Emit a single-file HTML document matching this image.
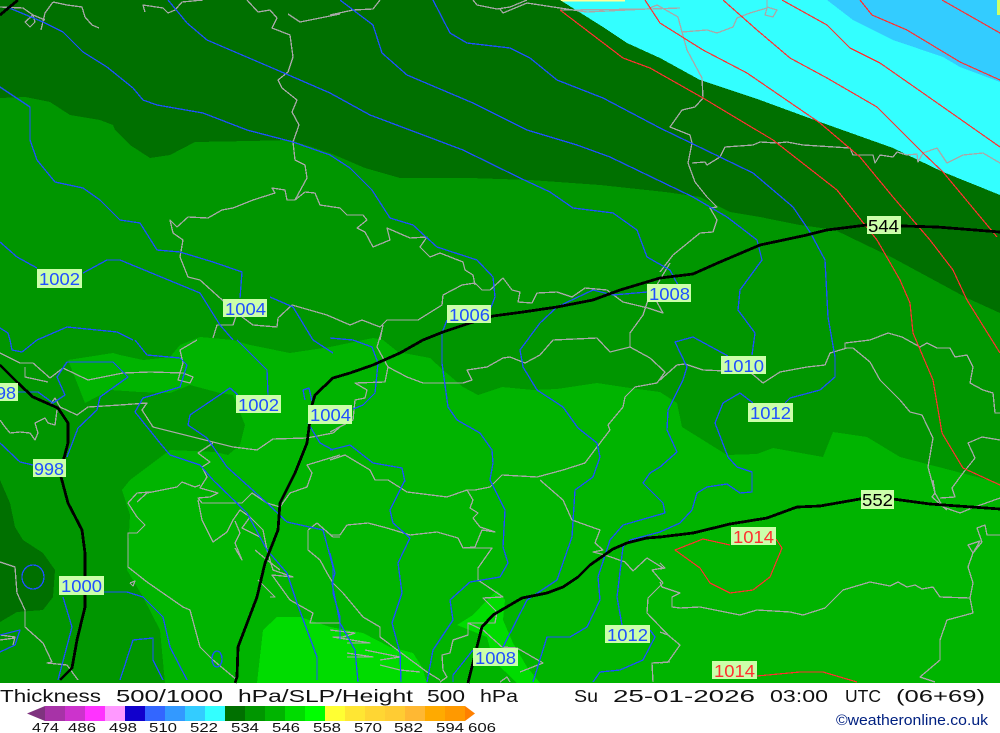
<!DOCTYPE html>
<html><head><meta charset="utf-8"><style>
html,body{margin:0;padding:0;background:#fff;width:1000px;height:733px;overflow:hidden}
svg{display:block}
.g,.b,.r,.k{fill:none;stroke-linejoin:round}
.g polyline{stroke:#a8a8a8;stroke-width:1.3;fill:none}
.b polyline{stroke:#1f50ff;stroke-width:1.3;fill:none}
.r polyline{stroke:#ff3030;stroke-width:1.2;fill:none}
.k polyline{stroke:#000;stroke-width:2.8;fill:none}
.l rect{fill:#ccffaa}
.l text{font:17.5px "Liberation Sans",sans-serif;fill:#1f50ff}
.t text{font:17.5px "Liberation Sans",sans-serif;fill:#111}
.n text{font:13px "Liberation Sans",sans-serif;fill:#111}
</style></head><body>
<svg width="1000" height="733" viewBox="0 0 1000 733" xmlns="http://www.w3.org/2000/svg">
<rect width="1000" height="733" fill="#fff"/>
<g shape-rendering="crispEdges">
<rect width="1000" height="683" fill="#009600"/>
<polygon fill="#33ffff" points="560,0 1000,0 1000,200 943,172 893,148 820,122 760,100 700,80 660,58 627,43 603,27"/>
<polygon fill="#33ccff" points="827,0 1000,0 1000,82 960,67 943,57 893,40 853,20"/>
<rect x="560" y="0" width="65" height="1.5" fill="#ffff99"/>
<rect x="997" y="0" width="3" height="15" fill="#ccff66"/>
<polygon fill="#007000" points="0,0 560,0 603,27 627,43 660,58 700,80 760,100 820,122 893,148 943,172 1000,195 1000,313 967,298 893,258 835,230 800,225 760,217 730,212 700,197 665,192 600,185 530,180 470,178 400,178 365,168 330,153 290,140 250,141 195,142 170,155 150,158 130,145 115,130 113,125 100,120 70,115 50,102 25,97 0,98"/>
<polygon fill="#00b400" points="68,360 113,353 120,355 143,360 170,357 180,345 200,337 233,340 250,345 290,353 310,350 330,347 373,338 383,340 398,352 430,358 443,370 463,387 478,395 502,387 533,390 557,389 597,383 630,388 660,392 677,403 682,427 727,455 757,454 773,448 823,457 833,432 867,437 900,457 950,470 1000,483 1000,683 165,683 160,630 143,597 127,570 130,515 122,490 130,480 170,450 215,452 228,455 240,445 245,425 233,395 220,393 190,385 170,393 140,392 110,390 85,403"/>
<polygon fill="#007000" points="0,480 10,503 15,527 23,540 43,553 55,570 53,597 43,610 17,612 0,622"/>
<polygon fill="#00dc00" points="257,683 263,630 277,617 300,617 330,627 363,633 390,647 413,653 422,667 427,683"/>
<polygon fill="#00dc00" points="497,590 505,600 503,620 513,643 527,667 540,683 517,683 493,660 487,637 457,625 473,615 487,600"/>
</g>
<g class="g" shape-rendering="crispEdges">
<polyline points="53,2 45,13 41,30"/>
<polyline points="53,2 67,5 82,7 85,17 92,25 99,28"/>
<polyline points="0,7 23,8 33,15 25,22 30,27 35,22 33,15 45,20"/>
<polyline points="145,12 143,5 163,8 168,13 175,10 182,2 203,0"/>
<polyline points="247,0 258,12 270,10 277,18 272,28 290,35 293,57 288,72 278,80 282,88 297,100 292,112 299,125 293,142 295,160 305,165 307,178 295,200 287,200 285,190 272,188 275,193 253,200 233,208 222,210 208,218 188,217 177,227 170,220 173,233 183,240 180,257 188,277 200,280 220,298 237,313 233,325 217,325 213,338"/>
<polyline points="237,313 253,325 277,327 278,318 292,305 327,315 350,325 362,320 380,327 387,320 403,320 418,320 442,305 443,295 462,285 475,283 482,290 490,290 503,278 512,290 520,292 518,302 532,303 537,293 557,292 572,297 585,288 607,290 623,302 648,308 663,313 652,293 670,263"/>
<polyline points="288,14 300,22 340,14"/>
<polyline points="295,200 305,192 315,193 320,205 340,208 347,215 363,215 367,220 357,228 365,232 373,247 390,240 387,228 410,238 427,237 420,247 430,257 440,253 463,262 465,270 473,275 475,285"/>
<polyline points="380,340 383,325"/>
<polyline points="382,330 377,347 388,367 385,382 355,383 367,390 365,398 355,400 353,420 330,432"/>
<polyline points="388,367 407,377 423,383 463,383 472,380 467,370 487,367 503,358 510,357 525,363 540,355 553,340 597,338 610,352 630,347 650,358 665,372 657,383 635,387 625,397 623,407 608,425 610,430 597,447 585,463 563,470 537,477 502,475 490,487 475,490 467,490"/>
<polyline points="630,347 630,333 643,315 648,300"/>
<polyline points="388,480 407,492 447,497 467,490 473,500 470,508 478,513 473,518 480,527 495,532 482,530 475,547 463,548"/>
<polyline points="330,535 340,535 347,525 368,523 387,528 410,535 437,532 458,538 463,548 473,548 492,548 478,568 478,580 503,597 483,598 497,612 495,623 468,623 483,630 502,647 517,648 543,663 520,672"/>
<polyline points="330,460 345,455 370,470 375,480 388,480"/>
<polyline points="0,353 20,363 33,363 50,378 63,368 88,380 123,373 150,372 183,373 193,377 190,383 178,380 183,363 180,350 197,340"/>
<polyline points="25,367 25,377 48,382"/>
<polyline points="33,397 50,405 55,398 60,407 77,415 88,407 120,405 147,403 142,410 153,427 197,438 233,447 257,450 273,439 307,438 333,433 340,427"/>
<polyline points="213,443 198,453 210,462 202,467 207,477 200,488 218,493 210,497 198,498 202,503 242,503 252,493 267,503 280,507 290,493 307,487 312,473 307,465 340,455"/>
<polyline points="137,502 147,493 177,487 182,482 195,487 200,485"/>
<polyline points="128,503 137,493 150,492"/>
<polyline points="128,503 137,517 145,525 137,533 128,533 128,567 147,582 183,607 190,610 200,647 213,660 237,680"/>
<polyline points="198,500 202,520 213,542 227,532 233,520 240,510 250,517 263,530 267,550 273,570 293,577 272,575 290,600 313,613 310,623 340,623"/>
<polyline points="235,521 240,533 235,543 242,560 235,548"/>
<polyline points="250,517 242,528 260,537"/>
<polyline points="255,550 267,560 280,570"/>
<polyline points="258,580 275,597 270,597"/>
<polyline points="308,530 317,523 333,537 340,537"/>
<polyline points="308,530 308,550 320,560 327,573 333,583 343,593 363,617 380,627 380,637 400,652 427,672 440,680"/>
<polyline points="0,562 15,567 17,593 25,610 25,627 43,643 52,662 47,663 67,665 78,680"/>
<polyline points="5,427 10,433 20,432 30,433 35,440 38,433 35,423 45,418 48,423 55,425 57,410"/>
<polyline points="0,420 5,427"/>
<polyline points="0,635 15,637 13,645"/>
<polyline points="0,640 15,638"/>
<polyline points="130,583 135,581 133,586 130,583"/>
<polyline points="660,380 677,365 685,364 703,370 750,372 763,383 780,372 807,367 825,365 830,353 847,348 853,348 870,362 880,380 900,400 910,412 922,415 933,438 928,467 935,493 932,497 947,510"/>
<polyline points="845,348 845,343 870,340 888,333 902,337 920,347 927,343 937,348 950,348 955,357 967,355 973,367 970,383 983,390 993,393 995,413 1000,413"/>
<polyline points="1000,440 982,437 968,443 975,458 963,473 952,488 955,497 940,498"/>
<polyline points="933,480 935,493 943,507 960,513 972,508 1000,498"/>
<polyline points="1000,535 987,535 985,525 977,528 982,542 973,553 968,545 980,541 973,553 968,567 973,583 970,598 940,597 933,587 922,589 915,585 907,587 898,582 890,586 870,582 843,590 825,608 803,615 790,612 757,610 740,615 700,607 680,608 672,607 672,597 680,593 662,587 660,582"/>
<polyline points="970,598 973,613 947,620 940,640 940,660 920,677 935,682"/>
<polyline points="660,632 668,635 680,645 668,662 660,663"/>
<polyline points="660,563 665,568 660,569"/>
<polyline points="540,480 563,500 572,520 600,530 595,543 603,550 593,552 605,555 625,562 633,571 647,558 663,568 652,570 663,583 648,598 647,613 670,637"/>
<polyline points="670,662 652,663 653,682"/>
<polyline points="468,623 468,635 453,640 450,653 442,655 443,670 447,677 440,682"/>
<polyline points="500,682 507,677 510,682"/>
<polyline points="330,630 355,633 343,637 333,637 370,643 347,643"/>
<polyline points="347,653 373,657 347,657"/>
<polyline points="365,650 400,657 380,660"/>
<polyline points="380,665 400,670 420,672"/>
<polyline points="560,10 573,10 587,12 647,9 657,5 678,17 682,32"/>
<polyline points="682,32 707,30 717,33 733,27 737,18 750,13 767,8 767,0"/>
<polyline points="767,8 765,15 773,17 777,10 767,7"/>
<polyline points="682,32 687,50 702,78 703,98 695,107 682,110 670,127 690,135 692,143 688,163 695,182 707,197 717,207 710,208 717,220 713,232 700,233 673,255 660,272"/>
<polyline points="692,163 705,162 707,165 720,157 725,147 753,145 760,142 777,143 787,142 803,145 850,148 853,155 873,155 875,163 880,155 893,157 897,152 907,155 917,154 918,162 923,153 937,148 947,163 963,155 983,153 1000,163"/>
<polyline points="330,15 353,10 373,9 380,0"/>
<polyline points="473,0 477,5 497,9 510,7 527,0"/>
<polyline points="500,9 503,13 527,3 573,10 650,9 680,8"/>
</g>
<g class="b" shape-rendering="crispEdges">
<polyline points="7,7 43,22 63,32 83,52 107,67 133,88 143,100 157,105 203,113 247,130 293,142 330,155 350,168 372,190 390,218 413,225 437,247 477,260 493,277 495,297 490,310"/>
<polyline points="447,320 442,333 442,363 448,407 457,420 480,433 492,450 493,463 490,480 505,510 503,547 508,563 500,577 470,582 450,600 453,620 433,650 427,682"/>
<polyline points="168,0 187,23 207,40 277,70 330,93 370,115 463,150 520,178 550,192 573,208 613,213 637,230 647,257 670,270 678,285"/>
<polyline points="647,292 613,295 593,290 557,307 540,323 520,350 523,367 537,390 563,407 578,428 597,443 600,457 593,477 575,490 572,537 557,580 527,600 503,647"/>
<polyline points="340,0 373,25 382,53 407,75 473,103 527,130 577,145 610,157 693,197 727,217 757,240 762,260 740,290 738,310 755,333 752,355"/>
<polyline points="433,0 450,33 467,43 510,48 530,58 557,80 603,98 660,128 753,173 793,207 810,232 825,260 828,317 835,357 835,377 820,390 790,398 785,403"/>
<polyline points="728,356 693,337 675,342 687,367 683,380 668,410 667,430 677,452 660,467 650,473 643,483 663,503 665,513 623,525 610,540 598,577 600,600 587,627 570,637 547,637 533,682"/>
<polyline points="622,625 617,597 623,547 630,540 660,532 680,523 692,510 697,493 707,487 727,484 740,493 752,492 752,472 737,467 728,457 715,423 723,403 740,393 753,403"/>
<polyline points="650,630 655,637 643,660 620,670 600,672 593,682"/>
<polyline points="473,650 453,675 453,682"/>
<polyline points="330,553 335,573 332,583 340,623 355,650 358,682"/>
<polyline points="405,480 390,510 393,523 410,538 398,563 402,593 392,623 400,653 401,682"/>
<polyline points="330,338 353,340 372,347 378,363 375,393 363,405 353,409"/>
<polyline points="18,392 38,392 53,403 65,395 57,377 67,362 113,362 128,377 100,397 97,410 78,428 67,457"/>
<polyline points="135,340 147,355 180,358 187,365 180,387 143,398 135,412 160,443 170,455 200,465 213,480 247,513 267,550 287,573 297,603 317,657 317,680"/>
<polyline points="237,340 267,370 268,395"/>
<polyline points="238,395 230,388 190,415 188,425 207,438 227,467 267,503 287,522 323,530 333,567 333,593 340,617 340,640"/>
<polyline points="0,443 20,462 33,465"/>
<polyline points="0,328 8,333 10,340 12,350 22,352 37,340 67,327 117,332 133,340"/>
<polyline points="103,592 127,592 143,597 163,617 170,647 187,680"/>
<polyline points="63,597 72,627 58,680"/>
<polyline points="120,680 133,640 153,638 153,660 163,680"/>
<ellipse cx="33" cy="577" rx="11" ry="12" style="fill:none;stroke:#1f50ff;stroke-width:1.3"/>
<ellipse cx="217" cy="659" rx="5" ry="8" style="fill:none;stroke:#1f50ff;stroke-width:1.3"/>
<polyline points="0,635 20,630 15,645 0,652"/>
<polyline points="0,87 30,107 30,140 37,160 55,182 83,188 100,200 120,220 140,223 157,250 180,252 213,262 242,272 240,298"/>
<polyline points="0,242 17,257 37,268"/>
<polyline points="83,273 107,260 120,260 200,293 220,325 233,340"/>
<polyline points="270,297 293,307 313,340 333,353"/>
<polyline points="330,450 350,445 373,463 402,468 405,482"/>
<polyline points="333,450 320,443 308,423"/>
<polyline points="305,400 303,390 309,388 313,405"/>
</g>
<g class="r" shape-rendering="crispEdges">
<polyline points="560,10 623,58 650,68 703,98 773,140 837,190 877,240 900,280 910,303 913,333 933,380 942,433 963,468 1000,485"/>
<polyline points="645,0 660,23 703,50 747,73 820,123 860,157 893,197 930,240 953,270 967,300 1000,353"/>
<polyline points="723,0 757,30 790,58 827,78 877,107 923,153 943,172 997,237"/>
<polyline points="782,0 827,25 850,48 880,63 933,100 1000,147"/>
<polyline points="860,0 872,15 907,30 960,62 1000,80"/>
<polyline points="942,0 1000,33"/>
<polyline points="730,545 703,539 675,550 700,568 710,583 730,593 753,590 770,577 782,548 776,539"/>
<polyline points="757,676 800,672 823,672 857,682"/>
</g>
<g class="k" shape-rendering="crispEdges">
<polyline points="468,683 477,647 482,627 493,615 522,598 547,593 563,587 578,577 590,565 613,549 627,543 647,538 660,537 693,533 730,524 767,518 797,507 820,506 860,499 893,499 930,504 1000,509"/>
<polyline points="0,365 18,383 33,397 58,408 68,423 68,443 60,473 68,503 82,530 85,553 85,607 77,640 72,668 60,680"/>
<polyline points="0,15 18,0"/>
<polyline points="235,683 237,677 238,647 257,597 265,563 278,530 280,503 295,473 307,443 312,405 315,395 333,378 350,373 373,365 400,353 423,340 443,332 470,323 493,316 523,312 557,307 593,300 620,290 660,278 693,274 720,262 760,245 807,235 827,230 867,225 937,227 1000,232"/>
</g>
<g class="l">
<rect x="37" y="269" width="45" height="19"/><text x="39" y="285" textLength="41" lengthAdjust="spacingAndGlyphs">1002</text>
<rect x="223" y="299" width="44" height="18"/><text x="225" y="315" textLength="41" lengthAdjust="spacingAndGlyphs">1004</text>
<rect x="447" y="305" width="44" height="18"/><text x="449" y="321" textLength="41" lengthAdjust="spacingAndGlyphs">1006</text>
<rect x="647" y="284" width="44" height="18"/><text x="649" y="300" textLength="41" lengthAdjust="spacingAndGlyphs">1008</text>
<rect x="721" y="356" width="45" height="18"/><text x="723" y="372" textLength="41" lengthAdjust="spacingAndGlyphs">1010</text>
<rect x="748" y="403" width="45" height="19"/><text x="750" y="419" textLength="41" lengthAdjust="spacingAndGlyphs">1012</text>
<rect x="236" y="395" width="45" height="18"/><text x="238" y="411" textLength="41" lengthAdjust="spacingAndGlyphs">1002</text>
<rect x="308" y="405" width="44" height="19"/><text x="310" y="421" textLength="41" lengthAdjust="spacingAndGlyphs">1004</text>
<rect x="33" y="459" width="33" height="18"/><text x="34" y="475" textLength="30" lengthAdjust="spacingAndGlyphs">998</text>
<rect x="0" y="383" width="18" height="18"/><text x="-14" y="399" textLength="30" lengthAdjust="spacingAndGlyphs">998</text>
<rect x="59" y="576" width="45" height="19"/><text x="61" y="592" textLength="41" lengthAdjust="spacingAndGlyphs">1000</text>
<rect x="605" y="625" width="45" height="18"/><text x="607" y="641" textLength="41" lengthAdjust="spacingAndGlyphs">1012</text>
<rect x="473" y="648" width="45" height="18"/><text x="475" y="664" textLength="41" lengthAdjust="spacingAndGlyphs">1008</text>
<rect x="731" y="527" width="45" height="18"/><text x="733" y="543" textLength="41" lengthAdjust="spacingAndGlyphs" style="fill:#ff3030">1014</text>
<rect x="712" y="661" width="45" height="18"/><text x="714" y="677" textLength="41" lengthAdjust="spacingAndGlyphs" style="fill:#ff3030">1014</text>
<rect x="861" y="490" width="33" height="19"/><text x="862" y="506" textLength="31" lengthAdjust="spacingAndGlyphs" style="fill:#000">552</text>
<rect x="867" y="216" width="34" height="18"/><text x="868" y="232" textLength="31" lengthAdjust="spacingAndGlyphs" style="fill:#000">544</text>
</g>
<g class="t">
<text x="0" y="702" textLength="101" lengthAdjust="spacingAndGlyphs">Thickness</text>
<text x="116" y="702" textLength="107" lengthAdjust="spacingAndGlyphs">500/1000</text>
<text x="238" y="702" textLength="175" lengthAdjust="spacingAndGlyphs">hPa/SLP/Height</text>
<text x="427" y="702" textLength="38" lengthAdjust="spacingAndGlyphs">500</text>
<text x="480" y="702" textLength="38" lengthAdjust="spacingAndGlyphs">hPa</text>
<text x="574" y="702" textLength="24" lengthAdjust="spacingAndGlyphs">Su</text>
<text x="613" y="702" textLength="142" lengthAdjust="spacingAndGlyphs">25-01-2026</text>
<text x="770" y="702" textLength="58" lengthAdjust="spacingAndGlyphs">03:00</text>
<text x="845" y="702" textLength="36" lengthAdjust="spacingAndGlyphs">UTC</text>
<text x="896" y="702" textLength="89" lengthAdjust="spacingAndGlyphs">(06+69)</text>
</g>
<g shape-rendering="crispEdges">
<rect x="45" y="706" width="20" height="15" fill="#a733a7"/>
<rect x="65" y="706" width="20" height="15" fill="#cc33cc"/>
<rect x="85" y="706" width="20" height="15" fill="#ff33ff"/>
<rect x="105" y="706" width="20" height="15" fill="#ff99ff"/>
<rect x="125" y="706" width="20" height="15" fill="#1100cc"/>
<rect x="145" y="706" width="20" height="15" fill="#3366ff"/>
<rect x="165" y="706" width="20" height="15" fill="#3399ff"/>
<rect x="185" y="706" width="20" height="15" fill="#33ccff"/>
<rect x="205" y="706" width="20" height="15" fill="#33ffff"/>
<rect x="225" y="706" width="20" height="15" fill="#007000"/>
<rect x="245" y="706" width="20" height="15" fill="#009600"/>
<rect x="265" y="706" width="20" height="15" fill="#00b400"/>
<rect x="285" y="706" width="20" height="15" fill="#00dc00"/>
<rect x="305" y="706" width="20" height="15" fill="#00ff00"/>
<rect x="325" y="706" width="20" height="15" fill="#ffff33"/>
<rect x="345" y="706" width="20" height="15" fill="#ffe633"/>
<rect x="365" y="706" width="20" height="15" fill="#ffd633"/>
<rect x="385" y="706" width="20" height="15" fill="#ffcc33"/>
<rect x="405" y="706" width="20" height="15" fill="#ffb833"/>
<rect x="425" y="706" width="20" height="15" fill="#ffaa00"/>
<rect x="445" y="706" width="20" height="15" fill="#ff9900"/>
</g>
<polygon points="27,713.5 45,706 45,721" fill="#7f337f"/>
<polygon points="465,706 475,713.5 465,721" fill="#ff8000"/>
<g class="n">
<text x="32" y="732" textLength="27" lengthAdjust="spacingAndGlyphs">474</text>
<text x="68" y="732" textLength="28" lengthAdjust="spacingAndGlyphs">486</text>
<text x="109" y="732" textLength="28" lengthAdjust="spacingAndGlyphs">498</text>
<text x="149" y="732" textLength="28" lengthAdjust="spacingAndGlyphs">510</text>
<text x="190" y="732" textLength="28" lengthAdjust="spacingAndGlyphs">522</text>
<text x="231" y="732" textLength="28" lengthAdjust="spacingAndGlyphs">534</text>
<text x="272" y="732" textLength="28" lengthAdjust="spacingAndGlyphs">546</text>
<text x="313" y="732" textLength="28" lengthAdjust="spacingAndGlyphs">558</text>
<text x="354" y="732" textLength="28" lengthAdjust="spacingAndGlyphs">570</text>
<text x="394" y="732" textLength="29" lengthAdjust="spacingAndGlyphs">582</text>
<text x="436" y="732" textLength="28" lengthAdjust="spacingAndGlyphs">594</text>
<text x="468" y="732" textLength="28" lengthAdjust="spacingAndGlyphs">606</text>
</g>
<text x="836" y="725" textLength="152" lengthAdjust="spacingAndGlyphs" style="font:14.5px 'Liberation Sans',sans-serif;fill:#002080">©weatheronline.co.uk</text>
</svg>
</body></html>
